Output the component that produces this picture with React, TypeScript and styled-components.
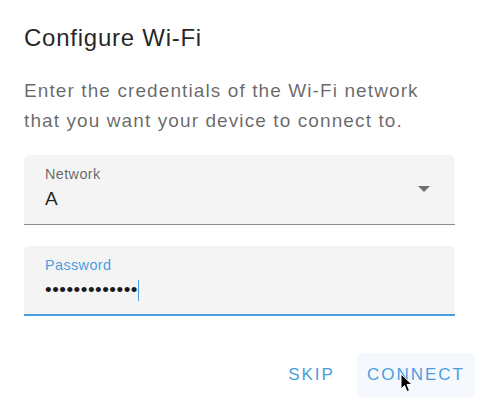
import styled, { createGlobalStyle } from 'styled-components';

const GlobalStyle = createGlobalStyle`
  html, body {
    margin: 0;
    padding: 0;
    background: #ffffff;
  }
  body {
    font-family: 'Liberation Sans', Arial, sans-serif;
  }
`;

const Dialog = styled.div`
  width: 484px;
  height: 402px;
  display: flex;
  flex-direction: column;
  background: #ffffff;
  position: relative;
  overflow: hidden;
`;

const Title = styled.h2`
  margin: 0;
  padding: 22px 24px 0;
  font-size: 24px;
  line-height: 32px;
  font-weight: 400;
  letter-spacing: 0.75px;
  color: rgba(0, 0, 0, 0.87);
`;

const Content = styled.div`
  display: flex;
  flex-direction: column;
  padding: 22px 29px 0 24px;
`;

const Description = styled.p`
  margin: 0 0 19px;
  max-width: 422px;
  font-size: 19px;
  line-height: 30px;
  letter-spacing: 1.1px;
  color: rgba(0, 0, 0, 0.6);
`;

const Field = styled.div<{ focused?: boolean }>`
  position: relative;
  height: 70px;
  box-sizing: border-box;
  padding: 10px 21px 0;
  background: #f4f4f4;
  border-radius: 5px 5px 0 0;
  border-bottom: ${p => (p.focused ? '2px solid #4a9ee0' : '1px solid #8c8c8c')};
  margin-bottom: 21px;
  display: flex;
  flex-direction: column;
`;

const Label = styled.label<{ focused?: boolean }>`
  font-size: 14.4px;
  line-height: 18px;
  letter-spacing: 0.4px;
  color: ${p => (p.focused ? '#4a9ee0' : 'rgba(0, 0, 0, 0.6)')};
`;

const Value = styled.div`
  display: flex;
  align-items: center;
  margin-top: 3px;
  height: 26px;
  font-size: 19px;
  line-height: 26px;
  color: rgba(0, 0, 0, 0.87);
`;

const Dots = styled.span`
  font-size: 19px;
  letter-spacing: 0.5px;
  color: #1a1a1a;
`;

const Caret = styled.span`
  display: inline-block;
  width: 1.5px;
  height: 21px;
  background: #4a9ee0;
`;

const Arrow = styled.svg`
  position: absolute;
  right: 25px;
  top: 31px;
`;

const Actions = styled.div`
  display: flex;
  justify-content: flex-end;
  gap: 12px;
  padding: 16px 9px 0 0;
`;

const Button = styled.button<{ hovered?: boolean }>`
  border: none;
  height: 44px;
  padding: 0 10px;
  border-radius: 5px;
  background: ${p => (p.hovered ? '#f5f9fd' : 'transparent')};
  font-family: 'Liberation Sans', Arial, sans-serif;
  font-size: 17px;
  letter-spacing: 2px;
  color: #4a9ee0;
  cursor: pointer;
`;

const Pointer = styled.svg`
  position: absolute;
  left: 400px;
  top: 373px;
`;

export default function App() {
  return (
    <Dialog>
      <GlobalStyle />
      <Title>Configure Wi-Fi</Title>
      <Content>
        <Description>
          Enter the credentials of the Wi-Fi network that you want your device to connect to.
        </Description>
        <Field>
          <Label>Network</Label>
          <Value>A</Value>
          <Arrow width="12" height="6" viewBox="0 0 12 6">
            <path d="M0 0 L12 0 L6 6 Z" fill="#6e6e6e" />
          </Arrow>
        </Field>
        <Field focused>
          <Label focused>Password</Label>
          <Value>
            <Dots>•••••••••••••</Dots>
            <Caret />
          </Value>
        </Field>
      </Content>
      <Actions>
        <Button>SKIP</Button>
        <Button hovered>CONNECT</Button>
      </Actions>
      <Pointer width="14" height="21" viewBox="0 0 14 21">
        <path
          d="M1 1 L1 16 L4.5 12.5 L7 18.5 L9.5 17.5 L7 11.5 L12 11.5 Z"
          fill="#000"
          stroke="#fff"
          strokeWidth="1"
          strokeLinejoin="round"
        />
      </Pointer>
    </Dialog>
  );
}
